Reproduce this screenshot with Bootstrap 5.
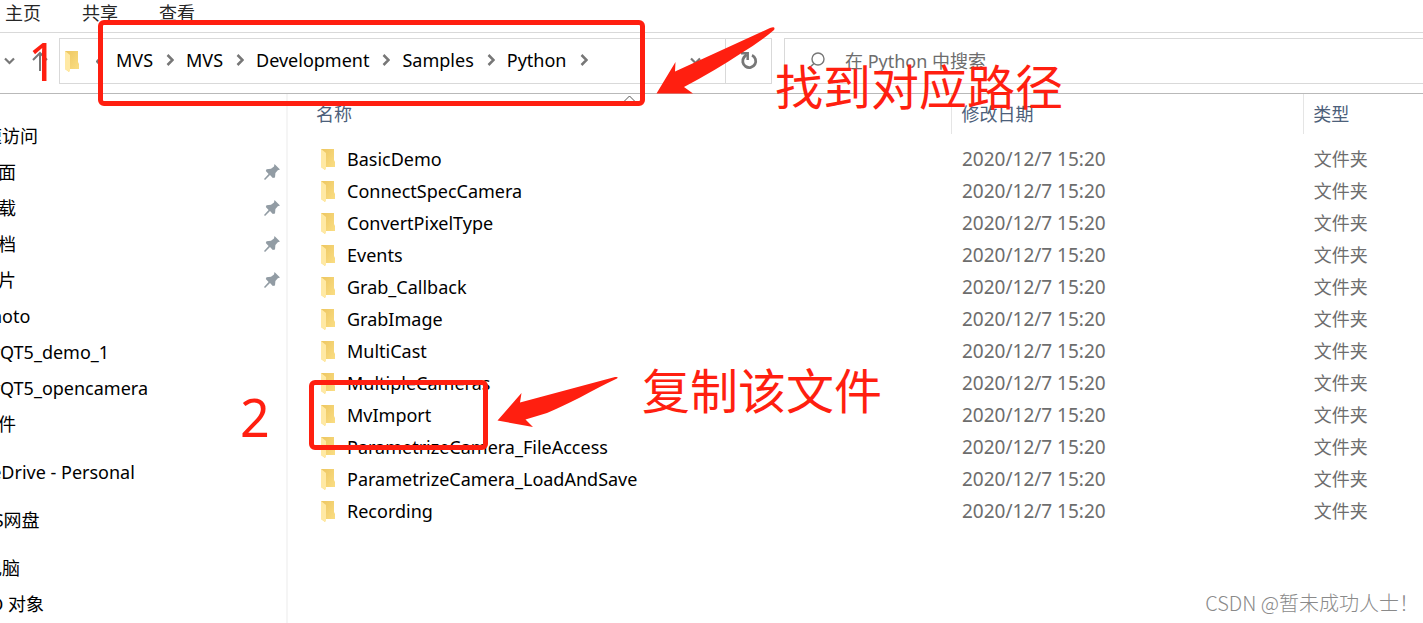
<!DOCTYPE html>
<html lang="zh-CN">
<head>
<meta charset="utf-8">
<meta name="viewport" content="width=device-width, initial-scale=1">
<title>Python</title>
<link href="https://cdn.jsdelivr.net/npm/bootstrap@5.3.0/dist/css/bootstrap.min.css" rel="stylesheet">
<script src="https://cdn.jsdelivr.net/npm/bootstrap@5.3.0/dist/js/bootstrap.bundle.min.js"></script>
<style>
  body { font-family: "Noto Sans", "Noto Sans CJK SC", sans-serif; font-size: 18px; line-height: 32px; color: #000; background: #fff; }
  a, a:hover { color: inherit; text-decoration: none; }
  svg { display: block; flex: none; }
  .explorer { min-height: 100vh; overflow: hidden; }

  .ribbon { height: 33px; border-bottom: 1px solid #d9d9d9; gap: 41px; padding-left: 5px; line-height: 26px; color: #262626; }
  .toolbar { height: 61px; border-bottom: 1px solid #b9b9b9; padding-top: 5px; }
  .history { width: 59px; height: 46px; padding-left: 4px; gap: 17px; }
  .history button, .address button { border: 0; background: none; padding: 0; }
  .address { height: 46px; border: 1px solid #d9d9d9; min-width: 0; }
  .crumbs { gap: 12px; margin-left: 15px; line-height: 30px; padding-bottom: 2px; }
  .address .reload { width: 46px; height: 44px; border-left: 1px solid #d9d9d9; padding-left: 14px; }
  .finder { width: 639px; height: 46px; margin-left: 12px; border: 1px solid #d9d9d9; border-right: 0; padding-left: 22px; gap: 20px; }
  .finder input { border: 0; outline: 0; padding: 0; background: none; min-width: 0; }
  .finder input::placeholder { color: #6d6d6d; opacity: 1; }

  .tree { width: 288px; border-right: 2px solid #f5f5f5; padding-top: 24px; overflow: hidden; line-height: 36px; flex: none; }
  .tree ul { margin: 0 0 12px -34px; }
  .tree ul ul { margin: 0 0 0 14px; }
  .tree li li { padding-right: 6px; }
  .tree a { white-space: nowrap; }

  .listing { table-layout: fixed; }
  .listing th, .listing td { padding: 0 0 0 9px; font-weight: 400; white-space: nowrap; height: 32px; }
  .listing th { height: 40px; color: #4c607a; border-left: 1px solid #e5e5e5; }
  .listing th:first-child { border-left: 0; padding-left: 28px; position: relative; }
  .listing td { color: #6d6d6d; padding-left: 10px; }
  .listing td:first-child { padding-left: 33px; }
  .listing td:nth-child(2) { font-size: 19px; }
  .listing td a { color: #000; gap: 12px; }
  .listing tbody::before { content: ""; display: block; height: 9px; }
  .col-name { width: 58.5%; }
  .col-date { width: 31%; }
  .sort-mark { position: absolute; left: 335px; top: 1px; }

  .note, .frame, .arrow { position: absolute; pointer-events: none; }
  .note { color: #ff1f10; font-size: 48px; line-height: 60px; white-space: nowrap; }
  .digit { font-size: 52px; }
  .frame { border: 5px solid #ff1f10; border-radius: 6px; }
  .frame-path { left: 98px; top: 20px; width: 547px; height: 86px; }
  .frame-file { left: 309px; top: 380px; width: 179px; height: 70px; }
  .arrow-path { left: 656px; top: 27px; }
  .arrow-file { left: 497px; top: 376px; }
  .note-one { left: 28px; top: 31px; }
  .note-two { left: 240px; top: 387px; }
  .note-path { left: 775px; top: 57px; }
  .note-file { left: 642px; top: 361px; }
  .credit { position: absolute; right: 4px; bottom: 4px; color: #8a8a8a; font-family: "Noto Sans CJK SC", sans-serif; font-size: 20px; font-weight: 300; }
</style>
</head>
<body>
<svg width="0" height="0" class="position-absolute" aria-hidden="true">
  <defs>
    <linearGradient id="folderBack" x1="0" x2="1" y1="0" y2="1"><stop offset="0" stop-color="#edc660"/><stop offset="1" stop-color="#fbdf86"/></linearGradient>
    <symbol id="folder" viewBox="0 0 14 21"><path fill="url(#folderBack)" d="M0 0H13V11L14 13V18H4V21L0 18Z"/><path fill="#ffe9a4" d="M0 0L5 4V20L4 21L0 18Z"/></symbol>
    <symbol id="pin" viewBox="0 0 16 16"><path fill="#929ca4" d="M10.5 0L16 5.400L13.800 6.200L11.400 9L11 13.500L8.800 14L6 11L1 16L0 15L4.600 10L1.800 7L2.500 5.200L7 4.800L10 2.500Z"/></symbol>
    <symbol id="chevron" viewBox="0 0 9 12"><path fill="none" stroke="#777" stroke-width="2.500" d="M2.500 1L7.500 6L2.500 11"/></symbol>
  </defs>
</svg>

<div class="explorer position-relative d-flex flex-column">
  <nav class="ribbon d-flex">
    <a href="#">主页</a><a href="#">共享</a><a href="#">查看</a>
  </nav>

  <div class="toolbar d-flex">
    <div class="history d-flex align-items-center">
      <button aria-label="最近浏览的位置"><svg width="11" height="8"><path d="M1 1.500L5.500 6L10 1.500" fill="none" stroke="#777" stroke-width="2.200"/></svg></button>
      <button aria-label="向上"><svg width="16" height="20"><path d="M8 20V2M1 9L8 2L15 9" fill="none" stroke="#777" stroke-width="2"/></svg></button>
    </div>
    <div class="address d-flex align-items-center flex-grow-1">
      <svg class="ms-1" width="16" height="21"><use href="#folder" x="1" width="14" height="21"/></svg>
      <svg class="ms-3" width="5" height="9"><path d="M5 0L1 4.500L5 9" fill="none" stroke="#777" stroke-width="2"/></svg>
      <nav class="crumbs d-flex align-items-center flex-grow-1">
        <a href="#">MVS</a><svg width="9" height="12"><use href="#chevron"/></svg>
        <a href="#">MVS</a><svg width="9" height="12"><use href="#chevron"/></svg>
        <a href="#">Development</a><svg width="9" height="12"><use href="#chevron"/></svg>
        <a href="#">Samples</a><svg width="9" height="12"><use href="#chevron"/></svg>
        <a href="#">Python</a><svg width="9" height="12"><use href="#chevron"/></svg>
      </nav>
      <button class="me-4" aria-label="以前的位置"><svg width="11" height="8"><path d="M1 1.500L5.500 6L10 1.500" fill="none" stroke="#777" stroke-width="2.200"/></svg></button>
      <button class="reload" aria-label="刷新"><svg width="18" height="18"><path d="M12 3.200A6.500 6.500 0 1 1 4 5.200L6.500 2.500" fill="none" stroke="#777" stroke-width="2.800"/><path d="M1 1.300H7.700V8" fill="none" stroke="#777" stroke-width="2.500"/></svg></button>
    </div>
    <div class="finder d-flex align-items-center">
      <svg width="18" height="18"><circle cx="11" cy="7" r="6" fill="none" stroke="#777" stroke-width="1.400"/><path d="M7 11.500L1 17" stroke="#777" stroke-width="1.600"/></svg>
      <input class="flex-grow-1" type="text" aria-label="搜索" placeholder="在 Python 中搜索">
    </div>
  </div>

  <div class="d-flex flex-grow-1">
    <nav class="tree">
      <ul class="list-unstyled">
        <li><a href="#">快速访问</a>
          <ul class="list-unstyled">
            <li class="d-flex justify-content-between align-items-center"><a href="#">桌面</a><svg width="16" height="16"><use href="#pin"/></svg></li>
            <li class="d-flex justify-content-between align-items-center"><a href="#">下载</a><svg width="16" height="16"><use href="#pin"/></svg></li>
            <li class="d-flex justify-content-between align-items-center"><a href="#">文档</a><svg width="16" height="16"><use href="#pin"/></svg></li>
            <li class="d-flex justify-content-between align-items-center"><a href="#">图片</a><svg width="16" height="16"><use href="#pin"/></svg></li>
            <li><a href="#">Photo</a></li>
            <li><a href="#">PyQT5_demo_1</a></li>
            <li><a href="#">PyQT5_opencamera</a></li>
            <li><a href="#">软件</a></li>
          </ul>
        </li>
      </ul>
      <ul class="list-unstyled"><li><a href="#">OneDrive - Personal</a></li></ul>
      <ul class="list-unstyled"><li><a href="#">WPS网盘</a></li></ul>
      <ul class="list-unstyled mb-0">
        <li><a href="#">此电脑</a>
          <ul class="list-unstyled"><li><a href="#">3D 对象</a></li></ul>
        </li>
      </ul>
    </nav>

    <main class="flex-grow-1">
      <table class="listing w-100">
        <colgroup><col class="col-name"><col class="col-date"><col></colgroup>
        <thead>
          <tr><th>名称<svg class="sort-mark" width="13" height="7"><path d="M1 6.500L6.500 1L12 6.500" fill="none" stroke="#555"/></svg></th><th>修改日期</th><th>类型</th></tr>
        </thead>
        <tbody>
          <tr><td><a href="#" class="d-flex align-items-center"><svg width="14" height="21"><use href="#folder"/></svg>BasicDemo</a></td><td>2020/12/7 15:20</td><td>文件夹</td></tr>
          <tr><td><a href="#" class="d-flex align-items-center"><svg width="14" height="21"><use href="#folder"/></svg>ConnectSpecCamera</a></td><td>2020/12/7 15:20</td><td>文件夹</td></tr>
          <tr><td><a href="#" class="d-flex align-items-center"><svg width="14" height="21"><use href="#folder"/></svg>ConvertPixelType</a></td><td>2020/12/7 15:20</td><td>文件夹</td></tr>
          <tr><td><a href="#" class="d-flex align-items-center"><svg width="14" height="21"><use href="#folder"/></svg>Events</a></td><td>2020/12/7 15:20</td><td>文件夹</td></tr>
          <tr><td><a href="#" class="d-flex align-items-center"><svg width="14" height="21"><use href="#folder"/></svg>Grab_Callback</a></td><td>2020/12/7 15:20</td><td>文件夹</td></tr>
          <tr><td><a href="#" class="d-flex align-items-center"><svg width="14" height="21"><use href="#folder"/></svg>GrabImage</a></td><td>2020/12/7 15:20</td><td>文件夹</td></tr>
          <tr><td><a href="#" class="d-flex align-items-center"><svg width="14" height="21"><use href="#folder"/></svg>MultiCast</a></td><td>2020/12/7 15:20</td><td>文件夹</td></tr>
          <tr><td><a href="#" class="d-flex align-items-center"><svg width="14" height="21"><use href="#folder"/></svg>MultipleCameras</a></td><td>2020/12/7 15:20</td><td>文件夹</td></tr>
          <tr><td><a href="#" class="d-flex align-items-center"><svg width="14" height="21"><use href="#folder"/></svg>MvImport</a></td><td>2020/12/7 15:20</td><td>文件夹</td></tr>
          <tr><td><a href="#" class="d-flex align-items-center"><svg width="14" height="21"><use href="#folder"/></svg>ParametrizeCamera_FileAccess</a></td><td>2020/12/7 15:20</td><td>文件夹</td></tr>
          <tr><td><a href="#" class="d-flex align-items-center"><svg width="14" height="21"><use href="#folder"/></svg>ParametrizeCamera_LoadAndSave</a></td><td>2020/12/7 15:20</td><td>文件夹</td></tr>
          <tr><td><a href="#" class="d-flex align-items-center"><svg width="14" height="21"><use href="#folder"/></svg>Recording</a></td><td>2020/12/7 15:20</td><td>文件夹</td></tr>
        </tbody>
      </table>
    </main>
  </div>

  <!-- hand-drawn notes over the window -->
  <div class="frame frame-path"></div>
  <div class="frame frame-file"></div>
  <svg class="arrow arrow-path" width="120" height="68"><path fill="#ff1f10" d="M0.500 66.500L19.500 35L19 44.500L114 1Q120 -1 118 3Q104 15 84 27Q60 43 28 60L37 66.500Z"/></svg>
  <svg class="arrow arrow-file" width="122" height="52"><path fill="#ff1f10" d="M0.500 44.500L24.500 17L23 26.500L118 1Q122 0.500 120 2.500Q104 10 83 21.500Q64 31 50 37L28.500 43.500L36 51Z"/></svg>
  <div class="note digit note-one">1</div>
  <div class="note digit note-two">2</div>
  <div class="note note-path">找到对应路径</div>
  <div class="note note-file">复制该文件</div>
  <div class="credit">CSDN @暂未成功人士！</div>
</div>
</body>
</html>
